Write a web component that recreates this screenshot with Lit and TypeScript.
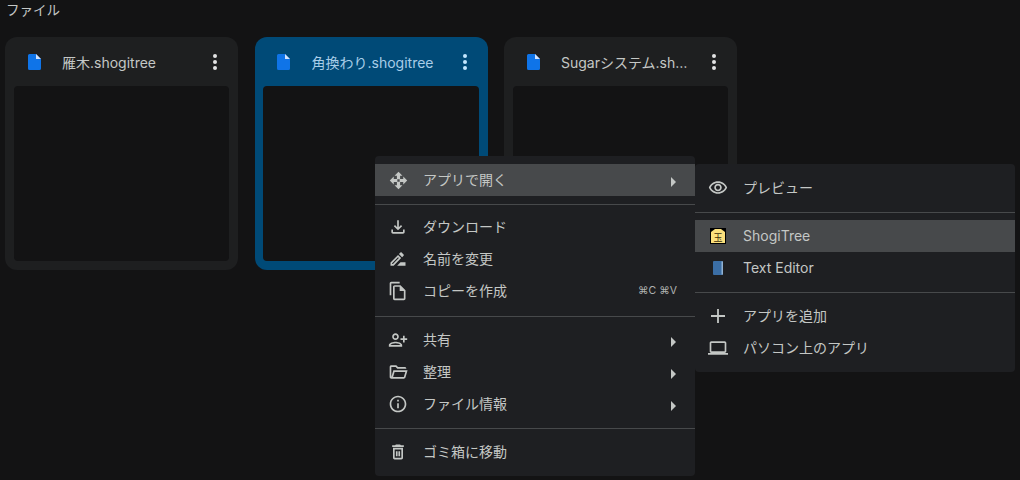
import { LitElement, html, css, svg } from "lit";
import { customElement } from "lit/decorators.js";
import { classMap } from "lit/directives/class-map.js";

const icons: Record<string, string> = {
  open: "M12 1 7 6h3v4H6V7l-5 5 5 5v-3h4v4H7l5 5 5-5h-3v-4h4v3l5-5-5-5v3h-4V6h3zM10.5 10.5h3v3h-3z",
  download: "M18 15v3H6v-3H4v3c0 1.1.9 2 2 2h12c1.1 0 2-.9 2-2v-3h-2zm-1-4l-1.41-1.41L13 12.17V4h-2v8.17L8.41 9.59 7 11l5 5 5-5z",
  rename: "M15 16l-4 4h10v-4h-6zM12.06 7.19L3 16.25V20h3.75l9.06-9.06-3.75-3.75zM5.92 18H5v-.92l7.06-7.06.92.92L5.92 18zM18.71 8.04c.39-.39.39-1.02 0-1.41l-2.34-2.34c-.39-.39-1.02-.39-1.41 0l-1.83 1.83 3.75 3.75 1.83-1.83z",
  copy: "M14 1H4c-1.1 0-2 .9-2 2v14h2V3h10V1zm1 4H8c-1.1 0-2 .9-2 2v14c0 1.1.9 2 2 2h11c1.1 0 2-.9 2-2V11l-6-6zM8 21V7h6v5h5v9H8z",
  share: "M9 12c2.21 0 4-1.79 4-4s-1.79-4-4-4-4 1.79-4 4 1.79 4 4 4zm0-6c1.1 0 2 .9 2 2s-.9 2-2 2-2-.9-2-2 .9-2 2-2zm0 8c-2.67 0-8 1.34-8 4v2h16v-2c0-2.66-5.33-4-8-4zm-6 4c.2-.71 3.3-2 6-2 2.69 0 5.78 1.28 6 2H3zm17-3v-3h3v-2h-3V7h-2v3h-3v2h3v3h2z",
  folder: "M4 20c-.55 0-1.02-.2-1.41-.59C2.2 19.02 2 18.55 2 18V6c0-.55.2-1.02.59-1.41C2.98 4.2 3.45 4 4 4h6l2 2h8c.55 0 1.02.2 1.41.59.39.39.59.86.59 1.41H11.17l-2-2H4v12l2.4-8h17.1l-2.58 8.6c-.13.43-.38.78-.73 1.03-.36.25-.75.37-1.19.37H4zm2.1-2h12.9l1.8-6H7.9l-1.8 6z",
  info: "M11 7h2v2h-2zm0 4h2v6h-2zm1-9C6.48 2 2 6.48 2 12s4.48 10 10 10 10-4.48 10-10S17.52 2 12 2zm0 18c-4.41 0-8-3.59-8-8s3.59-8 8-8 8 3.59 8 8-3.59 8-8 8z",
  trash: "M6 19c0 1.1.9 2 2 2h8c1.1 0 2-.9 2-2V7H6v12zM8 9h8v10H8V9zm7.5-5l-1-1h-5l-1 1H5v2h14V4h-3.5zM9.5 11h2v6h-2zm3 0h2v6h-2z",
  eye: "M12 6a9.77 9.77 0 0 1 8.82 5.5C19.17 14.87 15.79 17 12 17s-7.17-2.13-8.82-5.5A9.77 9.77 0 0 1 12 6m0-2C7 4 2.73 7.11 1 11.5 2.73 15.89 7 19 12 19s9.27-3.11 11-7.5C21.27 7.11 17 4 12 4zm0 5a2.5 2.5 0 0 1 0 5 2.5 2.5 0 0 1 0-5m0-2c-2.48 0-4.5 2.02-4.5 4.5S9.52 16 12 16s4.5-2.02 4.5-4.5S14.48 7 12 7z",
  add: "M19 12.9h-6.1V19h-1.8v-6.1H5v-1.8h6.1V5h1.8v6.1H19v1.8z",
  laptop: "M20 18c1.1 0 2-.9 2-2V6c0-1.1-.9-2-2-2H4c-1.1 0-2 .9-2 2v10c0 1.1.9 2 2 2H0v2h24v-2h-4zM4 6h16v10H4V6z",
};

const shogiIcon = svg`<svg width="16" height="16" viewBox="0 0 16 16">
  <rect width="16" height="16" fill="#000" />
  <path d="M1 4 5 1h6l4 3v11H1z" fill="#fbe07c" />
  <text x="8" y="12.5" text-anchor="middle" font-size="9" fill="#3a2c08" font-family="Noto Sans CJK JP">玉</text>
</svg>`;

const editorIcon = svg`<svg width="16" height="16" viewBox="0 0 16 16">
  <rect x="3" y="1" width="10" height="14" rx="1" fill="#3b6ea5" />
  <rect x="11.6" y="1.4" width="1.2" height="13.2" fill="#a9c4de" />
</svg>`;

type Item = { label: string; icon?: string; size?: number; arrow?: boolean; hint?: string; on?: boolean; custom?: unknown };

const mainMenu: Item[][] = [
  [{ label: "アプリで開く", icon: "open", size: 19, arrow: true, on: true }],
  [
    { label: "ダウンロード", icon: "download" },
    { label: "名前を変更", icon: "rename" },
    { label: "コピーを作成", icon: "copy", hint: "⌘C ⌘V" },
  ],
  [
    { label: "共有", icon: "share", arrow: true },
    { label: "整理", icon: "folder", arrow: true },
    { label: "ファイル情報", icon: "info", arrow: true },
  ],
  [{ label: "ゴミ箱に移動", icon: "trash" }],
];

const subMenu: Item[][] = [
  [{ label: "プレビュー", icon: "eye" }],
  [
    { label: "ShogiTree", custom: shogiIcon, on: true },
    { label: "Text Editor", custom: editorIcon },
  ],
  [
    { label: "アプリを追加", icon: "add", size: 24 },
    { label: "パソコン上のアプリ", icon: "laptop" },
  ],
];

const files = [
  { name: "雁木.shogitree", selected: false },
  { name: "角換わり.shogitree", selected: true },
  { name: "Sugarシステム.shogitree", selected: false },
];

@customElement("app-root")
export class AppRoot extends LitElement {
  static styles = css`
    :host {
      display: block;
      position: relative;
      width: 1020px;
      height: 480px;
      overflow: hidden;
      background: #131314;
      color: #c4c7c5;
      font-family: Inter, "Noto Sans CJK JP", sans-serif;
      font-size: 14px;
    }
    .title {
      height: 37px;
      padding: 1px 0 0 6px;
      box-sizing: border-box;
      font-size: 13.5px;
      line-height: 18px;
    }
    .cards {
      display: flex;
      gap: 16.5px;
      padding-left: 5px;
    }
    .card {
      width: 233px;
      height: 233px;
      box-sizing: border-box;
      padding: 0 9px 9px;
      border-radius: 12px;
      background: #1e1f20;
      display: flex;
      flex-direction: column;
    }
    .card.selected {
      padding-left: 8.5px;
      background: #004a77;
      color: #a8cde8;
    }
    .head {
      height: 49px;
      display: flex;
      align-items: center;
      padding-left: 14px;
      flex: none;
    }
    .file {
      flex: none;
      margin-right: 21px;
    }
    .selected .file {
      margin-right: 21.5px;
    }
    .name {
      flex: 1;
      min-width: 0;
      white-space: nowrap;
      overflow: hidden;
      text-overflow: ellipsis;
      margin-right: 23px;
    }
    .kebab {
      flex: none;
      width: 4px;
      margin-right: 12px;
      display: flex;
      flex-direction: column;
      gap: 2px;
    }
    .kebab i {
      width: 4px;
      height: 4px;
      border-radius: 50%;
      background: #e3e3e3;
    }
    .selected .kebab i {
      background: #c2e7ff;
    }
    .thumb {
      flex: 1;
      background: #131314;
      border-radius: 4px;
    }
    .menu {
      position: absolute;
      width: 320px;
      box-sizing: border-box;
      padding: 8px 0;
      background: #1e1f22;
      border-radius: 4px;
    }
    .main {
      left: 375px;
      top: 156px;
      z-index: 2;
    }
    .sub {
      left: 695px;
      top: 164px;
      z-index: 1;
    }
    hr {
      margin: 8px 0 7px;
      border: 0;
      height: 1px;
      background: #47494b;
    }
    /* the three rows under the first divider sit a pixel higher */
    .main .g1 {
      margin-top: -1px;
      padding-bottom: 1px;
    }
    .item {
      height: 32px;
      display: flex;
      align-items: center;
      padding: 0 18px 0 13px;
      color: #c4c7c5;
    }
    .item.on {
      background: #47494b;
    }
    .icon {
      width: 20px;
      height: 20px;
      flex: none;
      margin-right: 15px;
      display: flex;
      align-items: center;
      justify-content: center;
      color: #c4c7c5;
    }
    .icon svg {
      flex: none;
    }
    .glyph path {
      fill: currentColor;
    }
    .label {
      flex: 1;
      padding-bottom: 2px;
    }
    .hint {
      font-size: 10.5px;
      color: #b0b3b1;
      margin-bottom: 1px;
    }
    .arrow {
      width: 0;
      height: 0;
      margin: 3px 1px 0 0;
      border-left: 5.5px solid #c4c7c5;
      border-top: 5px solid transparent;
      border-bottom: 5px solid transparent;
    }
  `;

  renderItem(item: Item) {
    const size = item.size ?? 20;
    return html`<div class=${classMap({ item: true, on: !!item.on })}>
      <span class="icon">
        ${item.icon
          ? html`<svg class="glyph" width=${size} height=${size} viewBox="0 0 24 24"><path d=${icons[item.icon]} /></svg>`
          : item.custom}
      </span>
      <span class="label">${item.label}</span>
      ${item.hint ? html`<span class="hint">${item.hint}</span>` : ""}
      ${item.arrow ? html`<span class="arrow"></span>` : ""}
    </div>`;
  }

  renderMenu(cls: string, groups: Item[][]) {
    return html`<div class="menu ${cls}">
      ${groups.map(
        (group, i) => html`${i > 0 ? html`<hr />` : ""}
          <div class="g${i}">${group.map((it) => this.renderItem(it))}</div>`
      )}
    </div>`;
  }

  render() {
    return html`
      <div class="title">ファイル</div>
      <div class="cards">
        ${files.map(
          (f) => html`<div class=${classMap({ card: true, selected: f.selected })}>
            <div class="head">
              <svg class="file" width="13" height="16" viewBox="0 0 13 16">
                <path d="M1.5 0H8l5 5v9.5a1.5 1.5 0 0 1-1.5 1.5h-10A1.5 1.5 0 0 1 0 14.5v-13A1.5 1.5 0 0 1 1.5 0z" fill="#0f74e8" />
                <path d="M8 0l5 5H8z" fill="#d3e3fd" />
              </svg>
              <span class="name">${f.name}</span>
              <span class="kebab"><i></i><i></i><i></i></span>
            </div>
            <div class="thumb"></div>
          </div>`
        )}
      </div>
      ${this.renderMenu("main", mainMenu)} ${this.renderMenu("sub", subMenu)}
    `;
  }
}
